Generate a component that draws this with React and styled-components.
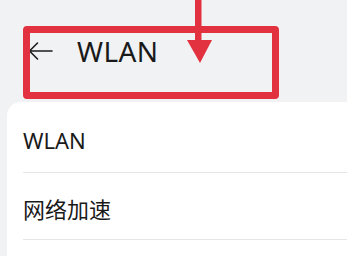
import React from "react";
import styled, { createGlobalStyle } from "styled-components";

const Global = createGlobalStyle`
  html, body { margin: 0; padding: 0; }
  body {
    background: #f1f2f4;
    font-family: "Noto Sans", "Noto Sans CJK SC", sans-serif;
    overflow: hidden;
  }
`;

const Page = styled.div`
  position: relative;
  width: 347px;
  height: 256px;
  background: #f1f2f4;
  overflow: hidden;
`;

const Header = styled.header`
  height: 102px;
  display: flex;
  align-items: flex-start;
  padding: 33px 0 0 27px;
  box-sizing: border-box;
  gap: 22px;
`;

const BackButton = styled.span`
  width: 28px;
  height: 36px;
  display: flex;
  align-items: center;
  color: #1c1c1c;
`;

const Title = styled.h1`
  margin: 0;
  font-size: 28px;
  font-weight: 400;
  line-height: 36px;
  color: #1a1a1a;
  letter-spacing: 0.4px;
`;

const Card = styled.section`
  margin-left: 7px;
  background: #ffffff;
  border-radius: 14px 0 0 0;
  padding: 0 0 0 16px;
  height: 160px;
`;

const Row = styled.div`
  height: ${(p) => p.$h}px;
  display: flex;
  align-items: center;
  padding-top: ${(p) => p.$pt}px;
  box-sizing: border-box;
  border-bottom: 1px solid #e6e6e6;
  font-size: ${(p) => p.$fs}px;
  color: #1a1a1a;
`;

const Annotation = styled.div`
  position: absolute;
  left: 23px;
  top: 26px;
  width: 256px;
  height: 73px;
  box-sizing: border-box;
  border: 7px solid #e3323f;
  border-radius: 4px;
  pointer-events: none;
`;

const Pointer = styled.svg`
  position: absolute;
  left: 184px;
  top: 0;
  pointer-events: none;
`;

export default function App() {
  return (
    <>
      <Global />
      <Page>
        <Header>
          <BackButton>
            <svg width="26" height="20" viewBox="0 0 26 20">
              <path
                d="M25 10H3 M10.5 2L2.5 10L10.5 18"
                fill="none"
                stroke="#1c1c1c"
                strokeWidth="1.6"
                strokeLinecap="round"
                strokeLinejoin="round"
              />
            </svg>
          </BackButton>
          <Title>WLAN</Title>
        </Header>
        <Card>
          <Row $h={71} $pt={6} $fs={22}>WLAN</Row>
          <Row $h={67} $pt={4} $fs={22}>网络加速</Row>
        </Card>
        <Annotation />
        <Pointer width="32" height="66" viewBox="0 0 32 66">
          <rect x="11" y="0" width="6.5" height="44" fill="#e3323f" />
          <polygon points="3,40 28,40 16,63" fill="#e3323f" />
        </Pointer>
      </Page>
    </>
  );
}
